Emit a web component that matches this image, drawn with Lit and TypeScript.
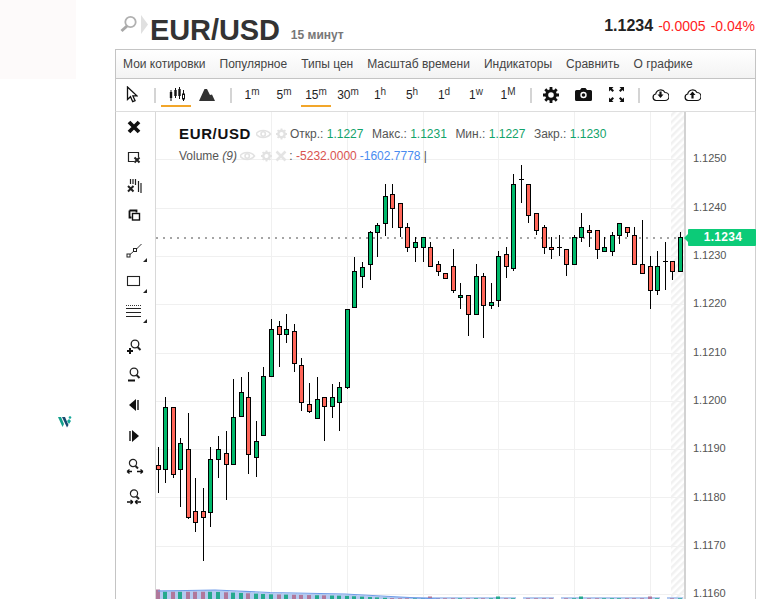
import { LitElement, html, css, svg } from "lit";
import { customElement } from "lit/decorators.js";

type C = [number, number, number, number, number, "g" | "r"];
const candles: C[] = [
  [158,447,465,469,493,"r"],[165,397,407,469,483,"g"],[173,407,407,474,478,"r"],[180,438,443,469,507,"g"],
  [188,413,449,517,519,"r"],[195,478,511,522,532,"r"],[203,488,511,517,561,"r"],[210,447,459,512,527,"g"],
  [218,436,449,459,478,"g"],[226,431,453,464,500,"r"],[233,379,417,464,464,"g"],[241,377,392,416,417,"g"],
  [248,372,397,454,474,"r"],[256,421,441,457,477,"g"],[263,367,376,435,435,"g"],[271,319,329,376,376,"g"],
  [279,321,326,334,367,"r"],[286,314,329,334,343,"g"],[294,324,331,363,372,"r"],[301,358,365,402,411,"r"],
  [309,383,404,411,413,"r"],[317,377,399,418,418,"g"],[324,397,397,406,441,"r"],[332,384,397,406,418,"g"],
  [339,382,387,402,431,"g"],[347,309,309,387,389,"g"],[354,257,271,307,307,"g"],[362,262,267,276,288,"g"],
  [370,231,232,264,280,"g"],[377,223,225,232,257,"g"],[385,184,196,223,236,"g"],[392,184,194,208,228,"r"],
  [400,203,203,227,237,"r"],[407,223,227,247,252,"r"],[415,237,242,247,262,"g"],[423,237,237,247,262,"g"],
  [430,242,247,266,266,"r"],[438,261,264,271,276,"r"],[445,273,273,278,278,"r"],[453,249,266,290,293,"r"],
  [460,283,295,297,309,"g"],[468,295,295,314,336,"r"],[476,264,276,314,314,"g"],[483,273,276,305,338,"r"],
  [491,283,302,305,309,"g"],[498,251,256,300,307,"g"],[506,247,254,266,278,"r"],[513,174,184,268,271,"g"],
  [528,184,184,215,223,"r"],[536,213,213,230,235,"r"],[544,225,227,247,254,"r"],[551,237,247,249,259,"r"],
  [566,249,249,264,276,"r"],[574,235,237,264,264,"g"],[581,213,227,237,242,"g"],[589,225,230,232,247,"r"],
  [597,230,230,249,259,"r"],[604,237,247,251,251,"g"],[612,232,235,251,256,"g"],[619,223,223,235,244,"g"],
  [627,227,227,232,237,"r"],[634,227,235,264,264,"r"],[642,220,264,273,273,"r"],[650,256,266,290,309,"r"],
  [657,251,266,290,295,"g"],[672,261,261,271,280,"r"],[680,232,237,271,271,"g"],
];
const dojis: [number, number, number, number][] = [[521,165,179,203],[559,235,247,256],[665,242,261,290]];
const vGrid = [271.5, 347.5, 423.5, 498.5, 574.5, 650.5];
const hGrid = [159.5, 208.5, 256.5, 304.5, 353.5, 401.5, 449.5, 497.5, 546.5, 594.5];
const prices: [string, number][] = [["1.1250",158],["1.1240",207],["1.1230",255],["1.1220",303],["1.1210",352],["1.1200",400],["1.1190",448],["1.1180",497],["1.1170",545],["1.1160",593]];

const volTop = (x: number) => x < 215 ? 591.5 : x < 270 ? 591.5 + (x - 215) * 0.045 : x < 345 ? 594 + (x - 270) * 0.02 : x < 400 ? 595.5 + (x - 345) * 0.05 : 598;
const volBars = [...candles.map(c => [c[0], c[5]] as [number, string])];

const eye = (x: number, y: number) => svg`<g transform="translate(${x} ${y})" fill="none" stroke="#e2e2e2" stroke-width="1.6"><path d="M0 5c3-4.600 11-4.600 14.500 0c-3.500 4.600-11.500 4.600-14.500 0z"/><circle cx="7.200" cy="5" r="2.200"/></g>`;
const gear = (x: number, y: number) => svg`<g transform="translate(${x} ${y})" fill="none" stroke="#e2e2e2"><circle cx="5.500" cy="5.500" r="3.200" stroke-width="2.400"/><path d="M5.500 0v2M5.500 9v2M0 5.500h2M9 5.500h2M1.600 1.600l1.400 1.400M8 8l1.400 1.400M1.600 9.400L3 8M8 3l1.400-1.400" stroke-width="1.800"/></g>`;
const xMark = (x: number, y: number) => svg`<path transform="translate(${x} ${y})" d="M0.500 0.500l9 9M9.500 0.500l-9 9" fill="none" stroke="#e4e4e4" stroke-width="2.600"/>`;

const toolIcons = [
  svg`<path d="M3 3l10 10M13 3L3 13" stroke="#111" stroke-width="3.800" fill="none"/>`,
  svg`<path d="M8 12.500H2.500V3.500h10V8" fill="none" stroke="#222" stroke-width="1.200"/><path d="M8.500 8.500l5 5M13.500 8.500l-5 5" stroke="#222" stroke-width="2"/>`,
  svg`<path d="M4.500 1v5M7 1v5M9.500 1v6M12.500 3v11M15 5v10" stroke="#222" stroke-width="1.200" fill="none"/><path d="M2 8l5.500 5.500M7.500 8L2 13.500" stroke="#222" stroke-width="2"/>`,
  svg`<path d="M3.500 3.500h7v2" fill="none" stroke="#111" stroke-width="1.800"/><path d="M3.500 3.500v7h2" fill="none" stroke="#111" stroke-width="1.800"/><rect x="6.500" y="6.500" width="7" height="6.500" fill="none" stroke="#111" stroke-width="1.400"/>`,
  svg`<path d="M4 11.500l4-3.500M10.500 6L15.500 1" stroke="#333" stroke-width="1" fill="none"/><rect x="1" y="11" width="3" height="3" fill="none" stroke="#222"/><rect x="7.500" y="5.500" width="3" height="3" fill="none" stroke="#222"/>`,
  svg`<rect x="1.500" y="2.500" width="12" height="9" fill="none" stroke="#222" stroke-width="1.100"/>`,
  svg`<path d="M0 1.500h15" stroke="#333" stroke-dasharray="1 1"/><path d="M0 4.500h15M0 8.500h15M0 12.500h15" stroke="#222" stroke-width="1"/>`,
  svg`<circle cx="9" cy="6" r="3.800" fill="none" stroke="#222" stroke-width="1.300"/><path d="M11.500 9l3 3" stroke="#222" stroke-width="2"/><path d="M1 13h6M4 10v6" stroke="#111" stroke-width="2"/>`,
  svg`<circle cx="8" cy="5" r="3.800" fill="none" stroke="#222" stroke-width="1.300"/><path d="M10.500 8l3 3" stroke="#222" stroke-width="2"/><path d="M2 13.500h7" stroke="#111" stroke-width="2"/>`,
  svg`<path d="M10 2v12L3 8z" fill="#111"/><path d="M12 3v10" stroke="#111" stroke-width="1.400"/>`,
  svg`<path d="M6 2v12l7-6z" fill="#111"/><path d="M4 3v10" stroke="#111" stroke-width="1.400"/>`,
  svg`<circle cx="7" cy="5" r="3.600" fill="none" stroke="#222" stroke-width="1.200"/><path d="M9.500 8l2.500 2.500" stroke="#222" stroke-width="2"/><path d="M1 13.500h5M1 13.500l2.500-2M1 13.500l2.500 2M11 13.500h6M17 13.500l-2.500-2M17 13.500l-2.500 2" stroke="#111" stroke-width="1.300" fill="none"/>`,
  svg`<circle cx="8" cy="4.500" r="3.600" fill="none" stroke="#222" stroke-width="1.200"/><path d="M10.500 7.500l2.500 2.500" stroke="#222" stroke-width="2"/><path d="M1 13h6M7 13l-2.500-2M7 13l-2.500 2M9 13h6M9 13l2.500-2M9 13l2.500 2" stroke="#111" stroke-width="1.300" fill="none"/>`,
];
const toolRows = [
  { h: 30 }, { h: 30 }, { h: 29 }, { h: 29 }, { h: 42, tri: true }, { h: 20, tri: true }, { h: 40, tri: true },
  { h: 28 }, { h: 30 }, { h: 31 }, { h: 30 }, { h: 31 }, { h: 30 },
];

@customElement("app-root")
export class AppRoot extends LitElement {
  static styles = css`
    :host { display: flex; width: 776px; height: 599px; overflow: hidden; background: #fff; font-family: "Liberation Sans", Arial, sans-serif; color: #333; }
    .aside { width: 115px; flex: none; display: flex; flex-direction: column; }
    .pale { width: 76px; height: 79px; background: #fdfafa; }
    .logo { width: 14px; height: 12px; margin: 337px 0 0 58px; display: block; }
    .main { width: 641px; flex: none; display: flex; flex-direction: column; }
    .head { height: 49px; flex: none; display: flex; align-items: flex-start; box-sizing: border-box; padding: 15px 0 0 5px; position: relative; }
    .head svg { flex: none; }
    .chev { margin-left: 4px; }
    .sym { font-size: 29px; font-weight: 700; line-height: 29px; color: #333; margin: 1px 0 0 1px; letter-spacing: -0.1px; }
    .tf { font-size: 12px; font-weight: 700; color: #777; margin: 13px 0 0 11px; line-height: 15px; }
    .quote { margin-left: auto; display: flex; align-items: baseline; margin-top: 2px; margin-right: 1px; }
    .last { font-size: 16px; font-weight: 700; color: #222; line-height: 18px; }
    .chg { font-size: 14px; color: #f22; margin-left: 5px; }
    .menu { height: 30px; flex: none; box-sizing: border-box; border: 1px solid #c4c4c4; background: linear-gradient(#fff, #f3f3f3); display: flex; align-items: center; padding-left: 7px; font-size: 12px; color: #444; }
    .menu span { margin-right: 14px; white-space: nowrap; }
    .bar { height: 33px; flex: none; box-sizing: border-box; border-left: 1px solid #c4c4c4; border-right: 1px solid #c4c4c4; border-bottom: 1px solid #ddd; display: flex; align-items: center; background: #fff; }
    .slot { height: 32px; display: flex; align-items: center; justify-content: center; box-sizing: border-box; flex: none; position: relative; padding-bottom: 1px; }
    .w30 { width: 30px; } .w31 { width: 31px; } .w32 { width: 32px; } .w33 { width: 33px; }
    .on::after { content: ""; position: absolute; left: 0; width: 30px; bottom: 4px; height: 2px; background: #f2a62a; }
    .t15::after { left: 1px; }
    .ptr { padding-left: 2px; }
    .sep { width: 2px; height: 15px; background: #d4d4d4; flex: none; }
    .ml8 { margin-left: 8px; } .mr5 { margin-right: 5px; } .mr4 { margin-right: 4px; } .ml6 { margin-left: 6px; } .ml5 { margin-left: 5px; } .mr2 { margin-right: 2px; }
    .per { font-size: 12px; color: #222; white-space: nowrap; }
    .per sup { font-size: 10px; line-height: 0; vertical-align: 4px; color: #333; }
    .body { flex: 1; display: flex; min-height: 0; }
    .tools { width: 41px; flex: none; box-sizing: border-box; border-left: 1px solid #c4c4c4; border-right: 1px solid #d8d8d8; display: flex; flex-direction: column; }
    .tool { position: relative; display: flex; align-items: center; justify-content: center; flex: none; padding-right: 2px; }
    .tri { position: absolute; right: 8px; top: calc(50% + 7px); width: 0; height: 0; border-left: 4px solid transparent; border-bottom: 4px solid #222; }
    .chart { flex: 1; position: relative; overflow: hidden; }
    .chart > svg { display: block; }
    .legend { position: absolute; left: 23px; top: 10px; display: flex; flex-direction: column; font-size: 12px; color: #555; }
    .lr { display: flex; align-items: center; height: 23px; white-space: pre; }
    .lr + .lr { margin-top: -1px; }
    .lsym { font-size: 15px; font-weight: 700; color: #111; letter-spacing: 0.65px; width: 77px; }
    .lic { flex: none; display: block; }
    .up { color: #12a36b; }
    .red { color: #d9534f; margin-right: 3px; }
    .blue { color: #4a8bf0; }
    .it { font-style: italic; width: 22px; }
    .vic { margin-left: -4px; }
    .mr { margin-right: 8.500px; }
    .ax { position: absolute; left: 537px; font-size: 11px; line-height: 12px; color: #555; letter-spacing: -0.05px; }
    .tag { position: absolute; left: 532px; top: 117px; width: 68px; height: 17px; background: #0ccb78; border-radius: 1px; color: #fff; font-size: 12px; font-weight: 700; line-height: 17px; text-align: center; letter-spacing: 0.3px; box-sizing: border-box; padding-left: 2px; }
    .tag::before { content: ""; position: absolute; left: -4px; top: 4.500px; border-right: 4px solid #0ccb78; border-top: 4px solid transparent; border-bottom: 4px solid transparent; }
  `;

  private chart() {
    return html`<svg width="600" height="487" viewBox="156 112 600 487">
      <defs><pattern id="h" width="5" height="5" patternUnits="userSpaceOnUse" patternTransform="rotate(-45)"><rect width="5" height="2.500" fill="#f1f1f1"/></pattern></defs>
      ${vGrid.map(x => svg`<path d="M${x} 112V599" stroke="#f0f0f0"/>`)}
      ${hGrid.map(y => svg`<path d="M156 ${y}H685" stroke="#f0f0f0"/>`)}
      <rect x="671" y="112" width="13" height="487" fill="url(#h)"/>
      <path d="M685 112V599" stroke="#d2d2d2" stroke-width="2"/>
      <path d="M755.500 112V599" stroke="#cfcfcf"/>
      <path d="M156 238H685" stroke="#888" stroke-width="1.600" stroke-dasharray="2 5"/>
      ${volBars.map(([x, c], i) => {
        const t = volTop(x);
        const top = i === 0 ? 589.5 : t + (x > 400 && i % 9 === 0 ? -1.5 : 0.3);
        return svg`<rect x="${x - 5}" y="${t - 1}" width="8" height="12" fill="#b4caf0"/><rect x="${x - 2}" y="${top}" width="4" height="12" fill="${c === "g" ? "#25a98e" : "#b0789c"}"/>`;
      })}
      <path d="M158 591L215 590L270 592.500L345 594L400 597L440 599" fill="none" stroke="#6f9ce8" stroke-width="1.200"/>
      ${candles.map(([x, hi, t, b, lo, c]) => svg`
        <path d="M${x + 0.5} ${hi}V${lo}" stroke="#000"/>
        <rect x="${x - 2 + 0.5}" y="${t + 0.5}" width="4" height="${b - t}" fill="${c === "g" ? "#00b96b" : "#ff6659"}" stroke="#000"/>`)}
      ${dojis.map(([x, hi, m, lo]) => svg`<path d="M${x + 0.5} ${hi}V${lo}M${x - 2} ${m + 0.5}H${x + 3}" stroke="#000"/>`)}
    </svg>`;
  }

  render() {
    const per = [["1","m"],["5","m"],["15","m"],["30","m"],["1","h"],["5","h"],["1","d"],["1","w"],["1","M"]];
    return html`
      <div class="aside">
        <div class="pale"></div>
        <svg class="logo" viewBox="0 0 14 12"><path d="M0 1h3l3 7-1.500 3z" fill="#13a08c"/><path d="M4 1h3l3.500 8-1.500 2.500z" fill="#17496f"/><path d="M9 5l2-2 2 2-2 3z" fill="#16a89a"/><circle cx="12" cy="1.500" r="1.300" fill="#16a89a"/></svg>
      </div>
      <div class="main">
        <div class="head">
          <svg width="17" height="18" viewBox="0 0 17 18"><circle cx="10.500" cy="7" r="5.200" fill="none" stroke="#b0b0b0" stroke-width="1.800"/><path d="M7 11l-5.500 5" stroke="#a8a8a8" stroke-width="3"/></svg>
          <svg class="chev" width="8" height="19" viewBox="0 0 8 19"><path d="M0 0l7 9.500L0 19z" fill="#e0e0e0"/></svg>
          <span class="sym">EUR/USD</span>
          <span class="tf">15 минут</span>
          <div class="quote"><span class="last">1.1234</span><span class="chg">-0.0005</span><span class="chg">-0.04%</span></div>
        </div>
        <div class="menu">${["Мои котировки","Популярное","Типы цен","Масштаб времени","Индикаторы","Сравнить","О графике"].map(m => html`<span>${m}</span>`)}</div>
        <div class="bar">
          <div class="slot w30 ptr"><svg width="12" height="17" viewBox="0 0 12 17"><path d="M1.500 1v12.500l3-2.800 2.200 5 2.400-1-2.200-4.800h4z" fill="#fff" stroke="#111" stroke-width="1.300"/></svg></div>
          <div class="sep ml8 mr5"></div>
          <div class="slot w31 on"><svg width="16" height="15" viewBox="0 0 16 15"><path d="M2 3v11M6.500 1v10M10.500 0v12M14.500 3v11" stroke="#111"/><rect x="0.800" y="5" width="2.400" height="6" fill="#111"/><rect x="5.300" y="3" width="2.400" height="6" fill="#111"/><rect x="9.300" y="2" width="2.400" height="7" fill="#111"/><rect x="13.500" y="7" width="2" height="5" fill="#fff" stroke="#111"/></svg></div>
          <div class="slot w30"><svg width="16" height="13" viewBox="0 0 16 13"><path d="M0 13L5.500 1l2.500 0 3 6 2-.5 3 6.500z" fill="#333"/></svg></div>
          <div class="sep ml8 mr4"></div>
          ${per.map(([n, u], i) => html`<div class="slot w32 ${i === 2 ? "on t15" : ""}"><span class="per">${n}<sup>${u}</sup></span></div>`)}
          <div class="sep ml6 mr2"></div>
          <div class="slot w33"><svg width="16" height="16" viewBox="0 0 16 16"><circle cx="8" cy="8" r="4.300" fill="none" stroke="#111" stroke-width="3"/><path d="M8 0v3M8 13v3M0 8h3M13 8h3M2.300 2.300l2.100 2.100M11.600 11.600l2.100 2.100M2.300 13.700l2.100-2.100M11.600 4.400l2.100-2.100" stroke="#111" stroke-width="2.800"/></svg></div>
          <div class="slot w33"><svg width="17" height="13" viewBox="0 0 17 13"><path d="M1.500 2H5l1.500-2h4L12 2h3.500A1.500 1.500 0 0 1 17 3.500v8A1.500 1.500 0 0 1 15.500 13h-14A1.500 1.500 0 0 1 0 11.500v-8A1.500 1.500 0 0 1 1.500 2z" fill="#111"/><circle cx="8.500" cy="7" r="3.200" fill="#fff"/><circle cx="8.500" cy="7" r="1.800" fill="#111"/></svg></div>
          <div class="slot w33"><svg width="15" height="15" viewBox="0 0 15 15"><path d="M0 0h4.500L3 1.500l2 2L3.500 5l-2-2L0 4.500zM15 0v4.500L13.500 3l-2 2L10 3.500l2-2L10.500 0zM0 15v-4.500L1.500 12l2-2L5 11.500l-2 2L4.500 15zM15 15h-4.500l1.500-1.500-2-2 1.500-1.500 2 2 1.500-1.500z" fill="#111"/></svg></div>
          <div class="sep ml5 mr4"></div>
          <div class="slot w32"><svg width="17" height="15" viewBox="0 0 17 15"><path d="M4 13.500A3.300 3.300 0 0 1 3.700 7 5 5 0 0 1 13 5.500a4 4 0 0 1 0 8z" fill="#fff" stroke="#111" stroke-width="1.200"/><path d="M8.500 4.500v4" stroke="#111" stroke-width="2.200"/><path d="M5.500 7.500h6l-3 3.500z" fill="#111"/></svg></div>
          <div class="slot w32"><svg width="17" height="15" viewBox="0 0 17 15"><path d="M4 13.500A3.300 3.300 0 0 1 3.700 7 5 5 0 0 1 13 5.500a4 4 0 0 1 0 8z" fill="#fff" stroke="#111" stroke-width="1.200"/><path d="M8.500 7.500v4" stroke="#111" stroke-width="2.200"/><path d="M5.500 8h6l-3-3.500z" fill="#111"/></svg></div>
        </div>
        <div class="body">
          <div class="tools">
            ${toolRows.map((r, i) => html`<div class="tool" style="height:${r.h}px"><svg width="18" height="17" viewBox="0 0 18 17">${toolIcons[i]}</svg>${r.tri ? html`<i class="tri"></i>` : ""}</div>`)}
          </div>
          <div class="chart">
            ${this.chart()}
            <div class="legend">
              <div class="lr"><span class="lsym">EUR/USD</span><svg class="lic" width="34" height="12" viewBox="0 0 34 12">${eye(0, 1)}${gear(20, 0.500)}</svg><span>Откр.: </span><span class="up mr">1.1227</span><span>Макс.: </span><span class="up mr">1.1231</span><span>Мин.: </span><span class="up mr">1.1227</span><span>Закр.: </span><span class="up">1.1230</span></div>
              <div class="lr"><span>Volume </span><span class="it">(9)</span><svg class="lic vic" width="49" height="12" viewBox="0 0 49 12">${eye(0, 1)}${gear(21, 0.500)}${xMark(36, 1)}</svg><span>: </span><span class="red">-5232.0000</span><span class="blue">-1602.7778</span><span> |</span></div>
            </div>
            ${prices.map(([p, y]) => html`<span class="ax" style="top:${y - 118}px">${p}</span>`)}
            <div class="tag">1.1234</div>
          </div>
        </div>
      </div>`;
  }
}
